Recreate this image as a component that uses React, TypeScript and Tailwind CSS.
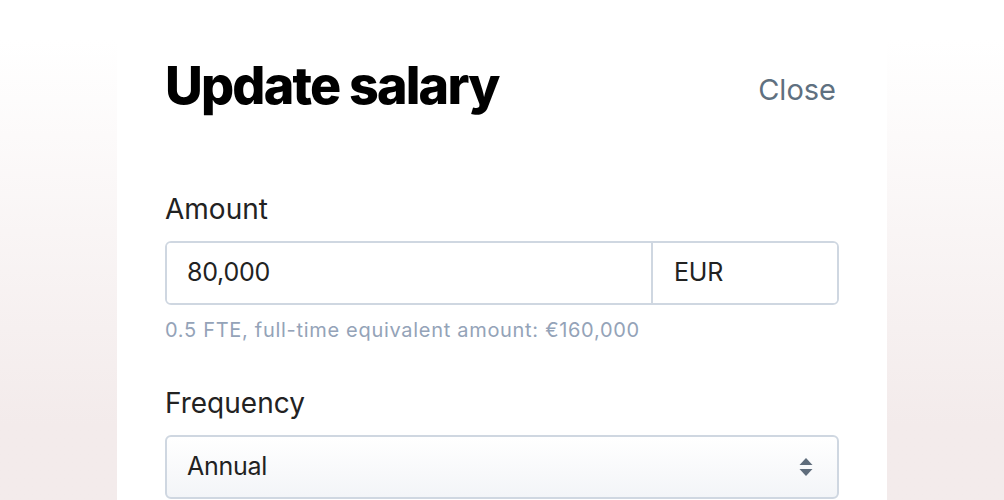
import { useState } from 'react'

const FONT = { fontFamily: 'Inter, "Noto Sans", sans-serif' }

function SortArrows() {
  return (
    <svg width="14" height="20" viewBox="0 0 14 20" className="text-[#5f6d7c]">
      <path d="M7 1 L13.5 8 L0.5 8 Z" fill="currentColor" />
      <path d="M0.5 12 L13.5 12 L7 19 Z" fill="currentColor" />
    </svg>
  )
}

export default function App() {
  const [amount, setAmount] = useState('80,000')
  const [frequency, setFrequency] = useState('Annual')

  return (
    <div
      className="h-[500px] w-full overflow-hidden bg-linear-to-b from-white from-[8%] to-[#f3ebeb] to-[85%]"
      style={FONT}
    >
      <div className="mx-auto mt-3 w-[770px] rounded-t-xl bg-white px-12 pt-12 pb-12">
        <div className="flex items-start justify-between">
          <h2 className="text-[52px] leading-none font-extrabold tracking-[-0.035em] text-black">
            Update salary
          </h2>
          <button className="mt-[15px] mr-[3px] text-[29px] leading-none text-[#5f7080]">
            Close
          </button>
        </div>

        <div className="mt-[83px]">
          <label className="block text-[28px] leading-none text-[#222]">Amount</label>
          <div className="mt-[18px] flex h-[64px] overflow-hidden rounded-md border-2 border-[#cfd7e1]">
            <input
              className="min-w-0 flex-1 bg-white px-5 text-[25px] tracking-[-0.01em] text-[#222] outline-none"
              value={amount}
              onChange={(e) => setAmount(e.target.value)}
            />
            <div className="flex w-[186px] items-center border-l-2 border-[#cfd7e1] bg-white px-[21px] text-[25px] tracking-[-0.01em] text-[#222]">
              EUR
            </div>
          </div>
          <p className="mt-[15px] text-[20px] leading-none tracking-[0.035em] text-[#94a3b8]">
            0.5 FTE, full-time equivalent amount: €160,000
          </p>
        </div>

        <div className="mt-[49px]">
          <label className="block text-[28px] leading-none text-[#222]">Frequency</label>
          <div className="relative mt-[18px] flex h-[64px] items-center rounded-md border-2 border-[#cfd7e1] bg-linear-to-b from-white to-[#f3f5f8] px-5">
            <select
              className="h-full w-full appearance-none bg-transparent text-[25px] tracking-[-0.01em] text-[#222] outline-none"
              value={frequency}
              onChange={(e) => setFrequency(e.target.value)}
            >
              <option>Annual</option>
              <option>Monthly</option>
              <option>Hourly</option>
            </select>
            <div className="pointer-events-none absolute right-[24px] top-1/2 -translate-y-1/2">
              <SortArrows />
            </div>
          </div>
        </div>
      </div>
    </div>
  )
}
